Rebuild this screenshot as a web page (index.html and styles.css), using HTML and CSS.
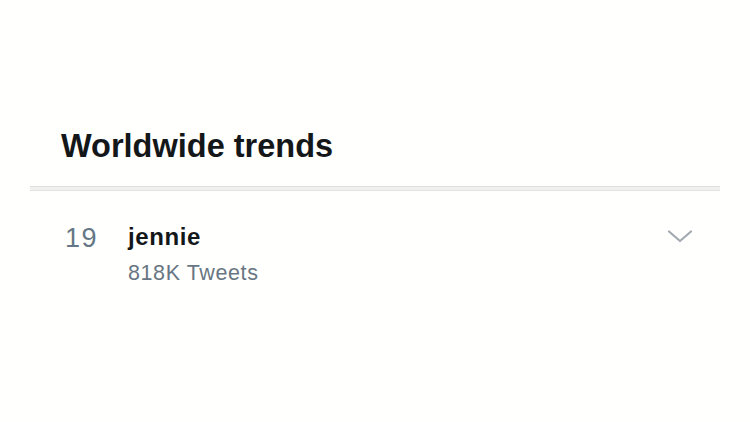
FILE: index.html
```html
<!DOCTYPE html>
<html>
<head>
<meta charset="utf-8">
<link rel="stylesheet" href="styles.css">
</head>
<body>
<div class="page">
  <h1 class="title">Worldwide trends</h1>
  <div class="divider"></div>
  <div class="trend">
    <div class="rank">19</div>
    <div class="info">
      <div class="name">jennie</div>
      <div class="count">818K Tweets</div>
    </div>
    <svg class="chevron" width="26" height="13" viewBox="0 0 26 13">
      <path d="M2 1.5 L13 11 L24 1.5" fill="none" stroke="#a3aab2" stroke-width="2.2" stroke-linecap="round" stroke-linejoin="round"/>
    </svg>
  </div>
</div>
</body>
</html>
```
FILE: styles.css
```css
html, body {
  margin: 0;
  padding: 0;
  background: #fffffd;
}
.page {
  width: 750px;
  height: 422px;
  padding-top: 124px;
  box-sizing: border-box;
  font-family: "Liberation Sans", Arial, sans-serif;
}
.title {
  margin: 0 0 0 61px;
  font-size: 32.5px;
  font-weight: 700;
  color: #14171a;
  line-height: 44px;
}
.divider {
  margin: 18px 30px 0 30px;
  height: 3px;
  background: #f0f0f0;
  border-top: 1px solid #dedede;
  border-bottom: 1px solid #e2e2e2;
}
.trend {
  display: flex;
  align-items: flex-start;
  padding: 30px 0 0 65px;
}
.rank {
  width: 63px;
  font-size: 27px;
  line-height: 34px;
  letter-spacing: 1.5px;
  color: #657786;
}
.info {
  flex: 1;
}
.name {
  font-size: 24px;
  font-weight: 700;
  line-height: 32px;
  letter-spacing: 0.6px;
  color: #14171a;
}
.count {
  margin-top: 5px;
  font-size: 21.5px;
  line-height: 30px;
  letter-spacing: 0.6px;
  color: #687683;
}
.chevron {
  margin: 9px 57px 0 0;
}
```
